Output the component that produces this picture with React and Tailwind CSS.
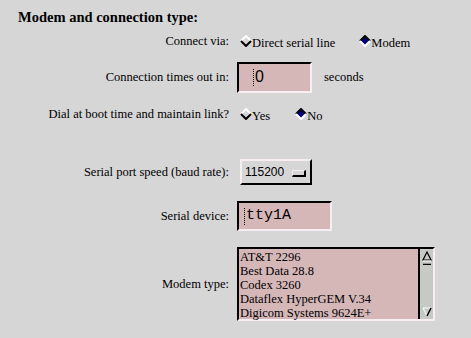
import React from 'react'

const Diamond = ({ checked }) => (
  <svg width="12" height="12" viewBox="0 0 12 12" className="shrink-0">
    {checked ? (
      <>
        <polygon points="6,1 11,6 6,11 1,6" fill="#000080" />
        <path d="M1 6 L6 1 L11 6" stroke="#000" strokeWidth="2" fill="none" />
        <path d="M1 6 L6 11 L11 6" stroke="#fff" strokeWidth="2" fill="none" />
      </>
    ) : (
      <>
        <path d="M1 6 L6 1 L11 6" stroke="#fff" strokeWidth="2" fill="none" />
        <path d="M1 6 L6 11 L11 6" stroke="#000" strokeWidth="2" fill="none" />
      </>
    )}
  </svg>
)

const Radio = ({ checked, children, className }) => (
  <label className={`flex items-center ${className || ''}`}>
    <Diamond checked={checked} />
    <span className="pt-[3px]">{children}</span>
  </label>
)

const Row = ({ label, className, children }) => (
  <div className={`flex items-center ${className}`}>
    <div className="w-[229px] shrink-0 text-right">{label}</div>
    <div className="ml-[8px] flex items-center">{children}</div>
  </div>
)

const Cursor = () => (
  <span className="h-[17px] w-[2px] shrink-0 border-l border-dotted border-black" />
)

const modems = ['AT&T 2296', 'Best Data 28.8', 'Codex 3260', 'Dataflex HyperGEM V.34', 'Digicom Systems 9624E+']

const App = () => {
  return (
    <div className="w-[471px] h-[338px] overflow-hidden bg-[#d6d6d6] text-black text-[12.5px] leading-[14px] font-['Liberation_Serif','Times_New_Roman',serif]">
      <div className="flex h-[30px] items-center pt-[4px] pl-[18px] text-[14.5px] font-bold">
        Modem and connection type:
      </div>

      <Row label="Connect via:" className="h-[22px]">
        <Radio className="ml-[3px]">Direct serial line</Radio>
        <Radio checked className="ml-[24px]">Modem</Radio>
      </Row>

      <Row label="Connection times out in:" className="h-[50px]">
        <div className="flex h-[31px] w-[75px] items-center border-2 border-t-black border-l-black border-b-[#f6eef2] border-r-[#f6eef2] bg-[#d5b7b8] pl-[14px] font-['Liberation_Sans',sans-serif] text-[16px]">
          <Cursor />
          0
        </div>
        <span className="ml-[12px]">seconds</span>
      </Row>

      <Row label="Dial at boot time and maintain link?" className="h-[24px]">
        <Radio className="ml-[3px]">Yes</Radio>
        <Radio checked className="ml-[25px]">No</Radio>
      </Row>

      <Row label="Serial port speed (baud rate):" className="mt-[24px] h-[44px]">
        <div className="ml-[3px] flex h-[26px] w-[72px] items-center border-2 border-t-[#f6eef2] border-l-[#f6eef2] border-b-black border-r-black pl-[3px] font-['Liberation_Sans',sans-serif] text-[12px]">
          115200
          <span className="ml-[8px] mt-[2px] h-[7px] w-[14px] border border-t-[#f6eef2] border-l-[#f6eef2] border-b-2 border-r-2 border-b-black border-r-black" />
        </div>
      </Row>

      <Row label="Serial device:" className="h-[44px]">
        <div className="flex h-[30px] w-[95px] items-center border-2 border-t-black border-l-black border-b-[#f6eef2] border-r-[#f6eef2] bg-[#d5b7b8] pl-[5px] font-['Liberation_Mono',monospace] text-[15px]">
          <Cursor />
          tty1A
        </div>
      </Row>

      <Row label="Modem type:" className="h-[92px]">
        <div className="flex h-[74px] w-[198px] border-2 border-t-black border-l-black border-b-[#f6eef2] border-r-[#f6eef2] bg-[#d5b7b8]">
          <ul className="flex-1 pl-[1px] pt-[1px]">
            {modems.map(m => (
              <li key={m} className="h-[14px] whitespace-nowrap">{m}</li>
            ))}
          </ul>
          <div className="flex w-[15px] flex-col items-center justify-between border-l-2 border-black bg-[#c6cac4] py-[2px]">
            <div className="flex flex-col items-center">
              <svg width="10" height="14" viewBox="0 0 10 14">
                <path d="M5 1 L9 9 L1 9 Z" fill="none" stroke="#000" strokeWidth="1.2" />
                <path d="M1 10 H9" stroke="#fff" strokeWidth="1" />
                <path d="M1 13.5 H9" stroke="#000" strokeWidth="1.5" />
              </svg>
            </div>
            <svg width="10" height="10" viewBox="0 0 10 10">
              <path d="M1 1 L9 1 L5 9 Z" fill="none" stroke="#fff" strokeWidth="1" />
              <path d="M9 1 L5 9" stroke="#000" strokeWidth="1.5" />
            </svg>
          </div>
        </div>
      </Row>
    </div>
  )
}

export default App
